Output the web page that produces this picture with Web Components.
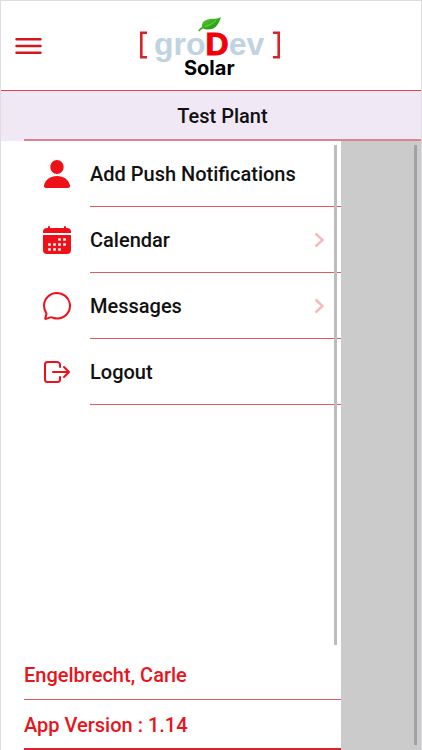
<!DOCTYPE html>
<html lang="en">
<head>
<meta charset="utf-8">
<meta name="viewport" content="width=device-width, initial-scale=1">
<title>groDev Solar</title>
<style>
body {
  margin: 0;
  font-family: Roboto, "Liberation Sans", sans-serif;
}
</style>
</head>
<body>
<solar-app>
  <solar-header slot="header"></solar-header>
  <plant-title slot="header">Test Plant</plant-title>
  <side-drawer>
    <menu-item icon="person">Add Push Notifications</menu-item>
    <menu-item icon="calendar" expandable>Calendar</menu-item>
    <menu-item icon="chat" expandable>Messages</menu-item>
    <menu-item icon="logout">Logout</menu-item>
    <info-row slot="footer">Engelbrecht, Carle</info-row>
    <info-row slot="footer" last>App Version : 1.14</info-row>
  </side-drawer>
</solar-app>

<script>
const ICONS = {
  person: `
    <path fill="currentColor" d="M256 32c-58 0-106 50-106 112s48 112 106 112 106-50 106-112S314 32 256 32zM80 480c-22 0-37-19-32-41 18-92 104-151 208-151s190 59 208 151c5 22-10 41-32 41z"/>`,
  calendar: `
    <path fill="currentColor" d="M480 128a64 64 0 0 0-64-64h-16V48a16 16 0 0 0-32 0v16H144V48a16 16 0 0 0-32 0v16H96a64 64 0 0 0-64 64v12a4 4 0 0 0 4 4h440a4 4 0 0 0 4-4zM32 416a64 64 0 0 0 64 64h320a64 64 0 0 0 64-64V179a3 3 0 0 0-3-3H35a3 3 0 0 0-3 3z"/>
    <path fill="none" stroke="#fff" stroke-width="42" stroke-linecap="square" d="M296 248h.1M376 248h.1M136 328h.1M216 328h.1M296 328h.1M376 328h.1M136 408h.1M216 408h.1M296 408h.1"/>`,
  chat: `
    <path fill="none" stroke="currentColor" stroke-width="32" stroke-linecap="round" d="M87.49 380c1.19-4.38-1.44-10.47-3.95-14.86a44.86 44.86 0 0 0-2.54-3.8 199.81 199.81 0 0 1-33-110C47.65 139.09 140.73 48 255.83 48 356.21 48 440 117.54 459.58 209.85a199 199 0 0 1 4.42 41.64c0 112.41-89.49 204.93-204.59 204.93-18.3 0-43-4.6-56.47-8.37s-26.92-8.77-30.39-10.11a31.09 31.09 0 0 0-11.12-2.07 30.71 30.71 0 0 0-12.09 2.43l-67.83 24.48a16 16 0 0 1-4.67 1.22 9.6 9.6 0 0 1-9.57-9.74 15.85 15.85 0 0 1 .6-3.29z"/>`,
  logout: `
    <path fill="none" stroke="currentColor" stroke-width="32" stroke-linecap="round" stroke-linejoin="round" d="M304 336v40a40 40 0 0 1-40 40H104a40 40 0 0 1-40-40V136a40 40 0 0 1 40-40h152c22 0 48 18 48 40v40M368 336l80-80-80-80M192 256h240"/>`,
}

class SolarApp extends HTMLElement {
  constructor() {
    super()
    this.attachShadow({ mode: 'open' }).innerHTML = /* html */ `
      <style>
        :host {
          --red: #f01018;
          --line: #e05a60;
          display: flex;
          flex-direction: column;
          box-sizing: border-box;
          min-height: 100vh;
          border: 1px solid #dedee2;
          border-bottom: 0;
          background: #fff;
          color: #111;
          font-size: 20px;
          font-weight: 500;
          line-height: 24px;
        }
        main {
          flex: 1;
          display: flex;
        }
        ::slotted(side-drawer) { flex: 1; }
        .backdrop {
          position: relative;
          width: 80px;
          background: #cbcbcb;
        }
        .thumb {
          position: absolute;
          top: 4px;
          right: 4px;
          bottom: 5px;
          width: 3px;
          background: #a2a2a2;
        }
      </style>
      <slot name="header"></slot>
      <main>
        <slot></slot>
        <div class="backdrop"><div class="thumb"></div></div>
      </main>
    `
  }
}

class SolarHeader extends HTMLElement {
  constructor() {
    super()
    this.attachShadow({ mode: 'open' }).innerHTML = /* html */ `
      <style>
        :host {
          display: grid;
          grid-template-columns: 1fr auto 1fr;
          align-items: center;
          height: 89px;
          padding: 0 14px;
          border-bottom: 1px solid #e0444a;
        }
        button {
          justify-self: start;
          display: flex;
          padding: 0;
          border: 0;
          background: none;
          color: #d5161c;
          cursor: pointer;
        }
        .name {
          font: bold 32px "Liberation Sans", Arial, sans-serif;
          fill: #c0d3e0;
        }
        .name .d {
          fill: #f20008;
          stroke: #f20008;
          stroke-width: 1px;
        }
        .sub {
          font: bold 20px Inter, "Liberation Sans", sans-serif;
          fill: #000;
        }
      </style>
      <button type="button" aria-label="Menu">
        <svg width="27" height="20" viewBox="0 0 27 20">
          <path d="M1.500 3.300h24M1.500 10h24M1.500 16.700h24" stroke="currentColor" stroke-width="2.500" stroke-linecap="round"/>
        </svg>
      </button>
      <svg width="144" height="68" viewBox="0 0 144 68" role="img" aria-label="groDev Solar">
        <defs>
          <linearGradient id="leaf" x1="0" y1="0" x2="1" y2="1">
            <stop offset="0" stop-color="#5fd22c"/>
            <stop offset="1" stop-color="#118a10"/>
          </linearGradient>
        </defs>
        <path d="M8 20.800H2.300V45.200H8M134 20.800h5.700V45.200H134" fill="none" stroke="#dc2028" stroke-width="2.600"/>
        <text class="name" x="15" y="43">gro<tspan class="d">D</tspan>ev</text>
        <path d="M63 15C62 8 70 6.500 75 6.800c3 0 5.500-.8 7-1.800-1.500 5-4 10.500-9 12-4 1-7.500.2-8.800-.6-1.600.6-2.800 1.500-3.800 3.200l-1.200-.8c1-2 2.500-3.200 3.800-3.800z" fill="url(#leaf)"/>
        <path d="M66 14.500c4-1 8-3 11-6" fill="none" stroke="#8fe05e" stroke-width=".7"/>
        <text class="sub" x="45" y="63">Solar</text>
      </svg>
    `
  }
}

class PlantTitle extends HTMLElement {
  constructor() {
    super()
    this.attachShadow({ mode: 'open' }).innerHTML = /* html */ `
      <style>
        :host {
          display: block;
          padding-left: 23px;
          background: #f1e8f6;
        }
        h1 {
          margin: 0;
          padding: 13px 0 11px;
          border-bottom: 2px solid #da858c;
          font: inherit;
          text-align: center;
        }
      </style>
      <h1><slot></slot></h1>
    `
  }
}

class SideDrawer extends HTMLElement {
  constructor() {
    super()
    this.attachShadow({ mode: 'open' }).innerHTML = /* html */ `
      <style>
        :host {
          display: flex;
          flex-direction: column;
        }
        nav {
          position: relative;
          flex: 1;
        }
        .thumb {
          position: absolute;
          top: 4px;
          right: 4px;
          bottom: 5px;
          width: 3px;
          background: #bdbdbd;
        }
        footer { padding-left: 23px; }
      </style>
      <nav>
        <slot></slot>
        <div class="thumb"></div>
      </nav>
      <footer><slot name="footer"></slot></footer>
    `
  }
}

class MenuItem extends HTMLElement {
  constructor() {
    super()
    this.attachShadow({ mode: 'open' })
  }

  connectedCallback() {
    const chevron = `
      <svg class="chevron" width="10" height="16" viewBox="0 0 10 16">
        <path d="M1.500 1.500 8.500 8l-7 6.500" fill="none" stroke="currentColor" stroke-width="2.500"/>
      </svg>`

    this.shadowRoot.innerHTML = /* html */ `
      <style>
        :host { display: block; }
        a {
          display: flex;
          align-items: stretch;
          gap: 17px;
          padding-left: 40px;
          color: inherit;
          text-decoration: none;
        }
        .icon {
          align-self: center;
          color: var(--red);
        }
        .body {
          flex: 1;
          display: flex;
          align-items: center;
          justify-content: space-between;
          padding: 21px 17px 20px 0;
          border-bottom: 1px solid var(--line);
        }
        .chevron { color: #f8b8bd; }
      </style>
      <a href="#">
        <svg class="icon" width="32" height="32" viewBox="0 0 512 512">${ICONS[this.getAttribute('icon')]}</svg>
        <span class="body"><slot></slot>${this.hasAttribute('expandable') ? chevron : ''}</span>
      </a>
    `
  }
}

class InfoRow extends HTMLElement {
  constructor() {
    super()
    this.attachShadow({ mode: 'open' }).innerHTML = /* html */ `
      <style>
        :host {
          display: block;
          padding: 13px 0 12px;
          border-bottom: 1px solid #e05a60;
          color: #e8141c;
        }
        :host([last]) {
          padding-bottom: 11px;
          border-bottom: 2px solid #d5262c;
        }
      </style>
      <slot></slot>
    `
  }
}

customElements.define('solar-app', SolarApp)
customElements.define('solar-header', SolarHeader)
customElements.define('plant-title', PlantTitle)
customElements.define('side-drawer', SideDrawer)
customElements.define('menu-item', MenuItem)
customElements.define('info-row', InfoRow)
</script>
</body>
</html>
